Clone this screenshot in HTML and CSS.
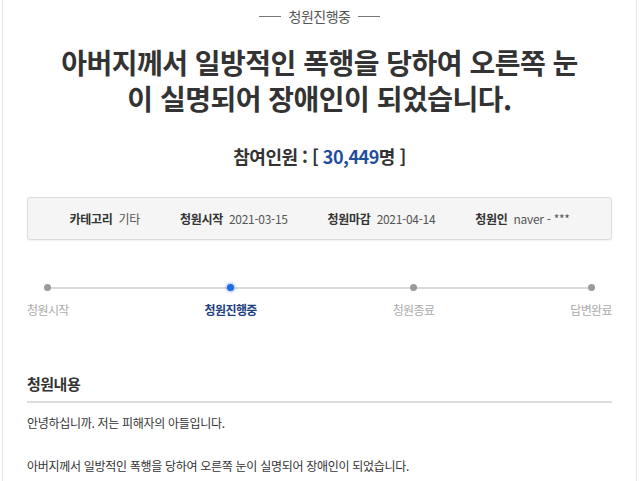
FILE: index.html
```html
<!DOCTYPE html>
<html lang="ko">
<head>
  <meta charset="UTF-8">
  <meta name="viewport" content="width=device-width, initial-scale=1.0">
  <title>청원진행중</title>
  <link rel="stylesheet" href="styles.css">
</head>
<body>
  <div class="page">
    <div class="status">청원진행중</div>
    <h1 class="title">아버지께서 일방적인 폭행을 당하여 오른쪽 눈<br>이 실명되어 장애인이 되었습니다.</h1>

    <p class="count">참여인원 : [ <span class="count-num">30,449</span>명 ]</p>

    <div class="info-box">
      <div class="info-item"><b>카테고리</b> 기타</div>
      <div class="info-item"><b>청원시작</b> 2021-03-15</div>
      <div class="info-item"><b>청원마감</b> 2021-04-14</div>
      <div class="info-item"><b>청원인</b> naver - ***</div>
    </div>

    <div class="steps">
      <div class="step"><span class="dot"></span>청원시작</div>
      <div class="step active"><span class="dot"></span>청원진행중</div>
      <div class="step"><span class="dot"></span>청원종료</div>
      <div class="step"><span class="dot"></span>답변완료</div>
    </div>

    <h2 class="section-title">청원내용</h2>
    <div class="content">
      <p>안녕하십니까. 저는 피해자의 아들입니다.</p>
      <p>아버지께서 일방적인 폭행을 당하여 오른쪽 눈이 실명되어 장애인이 되었습니다.</p>
    </div>
  </div>
</body>
</html>
```

FILE: styles.css
```css
/* Estilo global */
body {
  margin: 0;
  font-family: "Noto Sans CJK KR", "Noto Sans", sans-serif;
  background-color: #fff;
  color: #333;
}

.page {
  margin: 0 2px;
  border-left: 1px solid #e4e4e4;
  border-right: 1px solid #e4e4e4;
  padding: 6px 24px 0;
  min-height: 481px;
  box-sizing: border-box;
}

/* Cabecera */
.status {
  display: flex;
  justify-content: center;
  align-items: center;
  gap: 8px;
  font-size: 14px;
  color: #555;
  letter-spacing: -0.5px;
}

.status::before,
.status::after {
  content: "";
  width: 22px;
  height: 1px;
  background-color: #777;
}

.title {
  margin: 18px 0 0;
  font-size: 28px;
  line-height: 36px;
  font-weight: 700;
  text-align: center;
  letter-spacing: -0.5px;
  color: #333;
}

.count {
  margin: 27px 0 0;
  text-align: center;
  font-size: 18px;
  font-weight: 700;
  letter-spacing: -0.5px;
}

.count-num {
  color: #1f4e9c;
}

/* Caja de datos */
.info-box {
  margin-top: 28px;
  display: flex;
  justify-content: center;
  gap: 40px;
  height: 41px;
  align-items: center;
  background-color: #f5f5f5;
  border: 1px solid #dcdcdc;
  border-radius: 3px;
  box-shadow: 0 1px 2px rgba(0, 0, 0, 0.06);
  font-size: 12px;
  letter-spacing: -0.3px;
  color: #555;
}

.info-item b {
  color: #333;
  margin-right: 3px;
}

/* Progreso */
.steps {
  position: relative;
  display: flex;
  justify-content: space-between;
  margin-top: 44px;
}

.steps::before {
  content: "";
  position: absolute;
  top: 3px;
  left: 21px;
  right: 22px;
  height: 2px;
  background-color: #dadada;
}

.step {
  position: relative;
  display: flex;
  flex-direction: column;
  align-items: center;
  gap: 10px;
  font-size: 12px;
  letter-spacing: -0.6px;
  color: #aaa;
}

.dot {
  width: 7px;
  height: 7px;
  border-radius: 50%;
  background-color: #9a9a9a;
}

.step.active {
  color: #1d3f7e;
  font-weight: 700;
}

.step.active .dot {
  background-color: #1f6ae0;
  box-shadow: 0 0 3px 1px rgba(31, 106, 224, 0.45);
}

/* Contenido */
.section-title {
  margin: 55px 0 0;
  padding-bottom: 7px;
  border-bottom: 2px solid #dddddd;
  font-size: 15px;
  font-weight: 700;
  letter-spacing: -0.5px;
  color: #333;
}

.content {
  font-size: 12px;
  letter-spacing: -0.3px;
  color: #333;
}

.content p {
  margin: 11px 0 26px;
}
```
